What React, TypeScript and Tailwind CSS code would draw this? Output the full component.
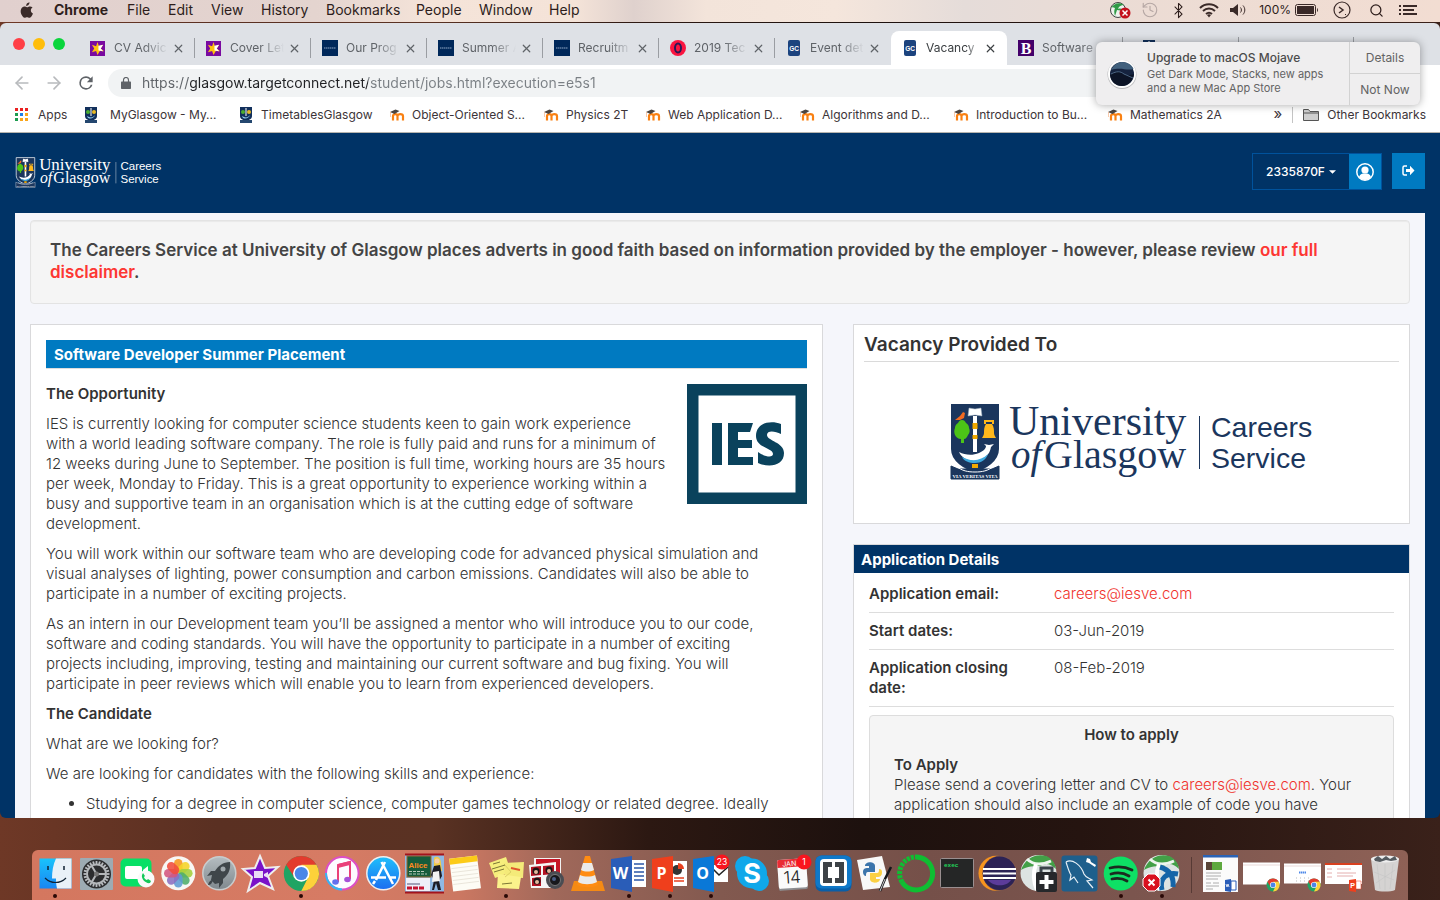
import React from "react";
import { Bluetooth, Search, History as HistoryIcon, ArrowLeft, ArrowRight, X } from "lucide-react";

const sans = "font-['Inter','Liberation_Sans',sans-serif]";

/* ---------- University logo ---------- */

function Logo({ color, rim, className }: { color: string; rim: string; className: string }) {
  return (
    <svg viewBox="-2 0 365 76" className={className} role="img" aria-label="University of Glasgow Careers Service">
      <path d="M1 1h46v44c0 12-13 19-23 22C14 64 1 57 1 45z" fill="#1b365d" stroke={rim} strokeWidth="2" />
      <path d="M0 62l7 3h34l7-3v13H0z" fill="#1b365d" stroke={rim} strokeWidth="1" />
      <path d="M5 62c6 5 12 6 19 6s13-1 19-6" fill="none" stroke="#fff" strokeWidth="1" />
      <text x="24" y="73.500" fontSize="5" fontWeight="700" textAnchor="middle" fill="#fff" fontFamily="Liberation Serif, serif">VIA VERITAS VITA</text>
      <rect x="22" y="12" width="4" height="36" fill="#fff" />
      <rect x="21.500" y="19" width="5" height="6" fill="#f2a900" />
      <rect x="21.500" y="31" width="5" height="4" fill="#f2a900" />
      <path d="M18 4l6 1 6-1 1 8-7-1-7 1z" fill="#fff" stroke="#9ab" strokeWidth=".5" />
      <path d="M4 16l5-4 3-4 2 1-1 5-4 2z" fill="#f26a21" />
      <path d="M11 16c2 0 3 1 4 3 2 1 3 3 3 5 1 2 1 5-1 7-1 2-2 4-4 4v4h-3v-4c-3 0-5-2-6-4-1-2-1-5 0-7 0-2 1-4 3-5 1-2 2-3 4-3z" fill="#4cc417" />
      <path d="M33 20v-4h10v4h-2v-2h-6v2z" fill="#ffb81c" />
      <path d="M35 20h6c2 3 2 6 2 9 0 2 1 3 2 5H31c1-2 2-3 2-5 0-3 0-6 2-9z" fill="#ffb81c" />
      <path d="M8 48c6 3 13 4 20 1 4-2 7-4 7-7l-2-2 5 1 5-1-3 3c-1 7-7 14-16 14-8 0-14-4-16-9z" fill="#fff" />
      <path d="M11 53c9 5 19 4 26-3-2 6-7 9-13 9s-11-2-13-6z" fill="#3fa9de" />
      <path d="M21 60h6v4h-6z" fill="#f2a900" />
      <g fill={color} fontFamily="Liberation Serif, serif">
        <text x="58" y="31" fontSize="42">University</text>
        <text x="60" y="64" fontSize="39" fontStyle="italic">of</text>
        <text x="93" y="64" fontSize="40">Glasgow</text>
      </g>
      <path d="M248.500 12v53" stroke={color} strokeWidth="1" />
      <g fill={color} fontFamily="Liberation Sans, sans-serif">
        <text x="260" y="33" fontSize="28.500">Careers</text>
        <text x="260" y="64" fontSize="28.500">Service</text>
      </g>
    </svg>
  );
}

/* ---------- Menu bar ---------- */

const menus: [string, string][] = [
  ["Chrome", "w-[73px] font-bold"],
  ["File", "w-[41px]"],
  ["Edit", "w-[43px]"],
  ["View", "w-[50px]"],
  ["History", "w-[65px]"],
  ["Bookmarks", "w-[90px]"],
  ["People", "w-[63px]"],
  ["Window", "w-[70px]"],
  ["Help", "w-[40px]"],
];

function MenuBar() {
  return (
    <nav className="flex h-[22px] shrink-0 items-center bg-[linear-gradient(90deg,#e1d0ce_0%,#e4d4cf_22%,#f5e4d9_30%,#f4e3d8_40%,#dfd1cd_44%,#f3e4da_49%,#f5e6dc_58%,#e5dcd9_67%,#ecdcd4_80%,#f2ddd2_100%)] pr-[23px] pb-0.5 pl-5 text-[14px] leading-5 text-[#2d1d1b]">
      <button aria-label="Apple menu" className="w-[34px]">
        <svg viewBox="0 0 16 18" className="h-4 w-[14px]" fill="#3a2a28">
          <path d="M10.800 0c.1 1.200-.4 2.300-1 3-.7.800-1.700 1.400-2.700 1.300C7 3.200 7.500 2.100 8.200 1.400 8.900.6 10 .1 10.800 0zM14.400 6.200c-1.300.8-2 1.900-2 3.300 0 1.600 1 2.900 2.400 3.500-.3 1-.8 1.900-1.400 2.800-.8 1.200-1.700 2.100-2.700 2.100-1.100 0-1.500-.6-2.700-.6s-1.700.6-2.700.6c-1.100 0-2-1.100-2.800-2.300C.9 13.200.2 10.200 1.200 8c.8-1.900 2.300-2.900 3.800-2.900 1.200 0 2.200.8 3 .8.700 0 1.900-.9 3.400-.9 1.100 0 2.200.4 3 1.200z" />
        </svg>
      </button>
      {menus.map(([label, cls]) => (
        <button key={label} className={"shrink-0 text-left " + cls}>{label}</button>
      ))}
      <div className="ml-auto flex items-center">
        <svg viewBox="0 0 22 18" className="mr-[10px] h-[18px] w-[22px]">
          <circle cx="9" cy="9" r="7.500" fill="#eef3ee" stroke="#444" />
          <path d="M2 7c3-5 9-6 13-3-3 0-5 1-6 4 3-1 5 0 6 2l-7-1-2 6c-1-3-1-6 0-8-2-1-3-1-4 0z" fill="#2f9a45" />
          <circle cx="16" cy="12" r="5.500" fill="#c4101c" />
          <path d="M13.500 9.500l5 5m0-5l-5 5" stroke="#fff" strokeWidth="1.500" />
        </svg>
        <HistoryIcon className="mr-[11px] size-[18px] text-[#b5a7a4]" strokeWidth={1.5} />
        <Bluetooth className="mr-3 size-[17px]" strokeWidth={1.5} />
        <svg viewBox="0 0 20 15" className="mr-[10px] h-[15px] w-5" fill="none" stroke="#3a2a28" strokeWidth="2">
          <path d="M1 5c5-5 13-5 18 0M4 8c3.500-3.300 8.500-3.300 12 0M7 11c2-1.700 4-1.700 6 0" />
          <path d="M8 12c1.300-1 2.700-1 4 0l-2 2.500z" fill="#3a2a28" stroke="none" />
        </svg>
        <svg viewBox="0 0 18 14" className="mr-3 h-[14px] w-[18px]" fill="#3a2a28">
          <path d="M1 5h3l5-4v12L4 9H1z" />
          <path d="M11.500 4.500c1.200 1.500 1.200 3.500 0 5M14 2.500c2.400 2.700 2.400 6.300 0 9" fill="none" stroke="#3a2a28" />
        </svg>
        <span className="mr-1 text-[12px]">100%</span>
        <svg viewBox="0 0 24 12" className="mr-[14px] h-3 w-6">
          <rect x=".5" y=".5" width="20" height="11" rx="2" fill="none" stroke="#3a2a28" />
          <rect x="2" y="2" width="17" height="8" fill="#3a2a28" />
          <path d="M22 4c1.300.6 1.300 3.400 0 4z" fill="#3a2a28" />
        </svg>
        <svg viewBox="0 0 18 18" className="mr-[18px] size-[18px]" fill="none" stroke="#3a2a28">
          <circle cx="9" cy="9" r="8" strokeWidth="1.200" />
          <path d="M6 6l4 3-4 3" strokeWidth="1.500" />
          <path d="M12 14l1-1" />
        </svg>
        <Search className="mr-[15px] size-[15px]" strokeWidth={2} />
        <svg viewBox="0 0 18 12" className="h-3 w-[18px]" stroke="#3a2a28" strokeWidth="2">
          <path d="M0 2h2M4 2h14M0 6h2M4 6h11M0 10h2M4 10h14" />
        </svg>
      </div>
    </nav>
  );
}

/* ---------- Browser tabs ---------- */

const Purple = () => (
  <svg viewBox="0 0 16 16" className="size-[15px]">
    <rect width="16" height="16" fill="#7a0aa0" />
    <path d="M8 1l1.500 4.500L14 4l-2.500 4L15 11l-4.500-.3L8 15l-1.500-4.300L2 12l2.500-4L2 4l4.500 1.500z" fill="#ffc20e" />
    <path d="M9 5l5-1-2.500 4L14 11l-5-1z" fill="#fff" />
  </svg>
);
const Navy = () => (
  <svg viewBox="0 0 16 16" className="size-4">
    <rect width="16" height="16" fill="#00285a" />
    <path d="M2 8h12" stroke="#8fa6c4" strokeWidth="1" strokeDasharray="1.500 .5" />
  </svg>
);
const Round = () => (
  <svg viewBox="0 0 16 16" className="size-4">
    <circle cx="8" cy="8" r="8" fill="#fa1540" />
    <ellipse cx="8" cy="8" rx="3" ry="4.500" fill="none" stroke="#2b1a55" strokeWidth="2" />
  </svg>
);
const GC = () => (
  <svg viewBox="0 0 12 16" className="ml-0.5 h-4 w-3">
    <rect width="12" height="16" rx="2" fill="#1c437e" />
    <text x="6" y="10.500" fontSize="6.500" fontWeight="700" textAnchor="middle" fill="#fff" fontFamily="Liberation Sans, sans-serif">GC</text>
  </svg>
);
const Bee = () => (
  <svg viewBox="0 0 16 16" className="size-4">
    <rect width="16" height="16" fill="#43006a" />
    <text x="8" y="13.500" fontSize="16" fontWeight="700" textAnchor="middle" fill="#fff" fontFamily="Liberation Serif, serif">B</text>
  </svg>
);
const MiniCrest = () => (
  <svg viewBox="0 0 12 16" className="h-4 w-[12px]">
    <path d="M0 0h12v9c0 3-3 4-6 5-3-1-6-2-6-5z" fill="#12305c" />
    <circle cx="3" cy="5" r="2" fill="#4caf30" />
    <circle cx="9" cy="5" r="2" fill="#e8b923" />
    <path d="M5.500 1h1v8h-1z" fill="#fff" />
    <path d="M2 9c3 2 6 2 8-1-1 4-7 5-8 1z" fill="#8ecbee" />
    <path d="M0 13h12v3H0z" fill="#24476f" />
  </svg>
);

const tabs: { title: string; icon: React.ReactNode; active?: boolean; line?: boolean }[] = [
  { title: "CV Advic", icon: <Purple />, line: true },
  { title: "Cover Let", icon: <Purple />, line: true },
  { title: "Our Prog", icon: <Navy />, line: true },
  { title: "Summer A", icon: <Navy />, line: true },
  { title: "Recruitm", icon: <Navy />, line: true },
  { title: "2019 Tec", icon: <Round />, line: true },
  { title: "Event det", icon: <GC /> },
  { title: "Vacancy", icon: <GC />, active: true },
];

function TabStrip() {
  return (
    <div className="flex h-[42px] shrink-0 items-end overflow-hidden bg-[#dee1e6]">
      <div className="flex h-[42px] w-[79px] shrink-0 items-center gap-2 pl-[13px]">
        <button aria-label="Close window" className="size-3 rounded-full bg-[#ff3f46]" />
        <button aria-label="Minimise window" className="size-3 rounded-full bg-[#ffbd0a]" />
        <button aria-label="Zoom window" className="size-3 rounded-full bg-[#0ad53c]" />
      </div>
      {tabs.map((t) => (
        <div
          key={t.title}
          className={"relative flex h-[34px] w-[116px] shrink-0 items-center rounded-t-lg pl-[11px] text-[12px] " + (t.active ? "bg-white text-[#3c4043]" : "text-[#5f6368]")}
        >
          <span className="flex w-6 shrink-0 items-center">{t.icon}</span>
          <a href="#" className={"w-[54px] whitespace-nowrap " + (t.active ? "[mask-image:linear-gradient(to_right,black_75%,transparent)]" : "[mask-image:linear-gradient(to_right,black_55%,transparent)]")}>{t.title}</a>
          <button aria-label={"Close " + t.title} className="ml-1"><X className="size-[13px]" strokeWidth={2.2} /></button>
          {t.line && <span className="absolute top-[7px] right-0 h-5 w-px bg-[#9a9da2]" />}
        </div>
      ))}
      <div className="flex h-[34px] w-[116px] shrink-0 items-center justify-between text-[12px] text-[#5f6368]">
        <span className="flex w-[35px] shrink-0 items-center pl-[11px]"><Bee /></span>
        <a href="#" className="flex-1 [mask-image:linear-gradient(to_right,black_40px,transparent_64px)]">Software</a>
        <span className="mb-0.5 h-5 w-px bg-[#9a9da2]" />
      </div>
      <div className="flex h-[34px] w-[116px] shrink-0 items-center justify-between pl-5">
        <MiniCrest />
        <span className="mb-0.5 h-5 w-px bg-[#9a9da2]" />
      </div>
      <div className="flex h-[34px] w-[115px] shrink-0 items-center justify-end">
        <span className="mb-0.5 h-5 w-px bg-[#9a9da2]" />
      </div>
    </div>
  );
}

/* ---------- Toolbar and bookmarks ---------- */

function Toolbar() {
  return (
    <div className="flex h-9 shrink-0 items-center bg-white pl-3">
      <button aria-label="Back" className="w-8"><ArrowLeft className="size-5 text-[#b8babd]" /></button>
      <button aria-label="Forward" className="w-8"><ArrowRight className="size-5 text-[#b8babd]" /></button>
      <button aria-label="Reload" className="w-8">
        <svg viewBox="0 0 24 24" className="size-5" fill="#5f6368">
          <path d="M17.650 6.350A7.960 7.960 0 0 0 12 4a8 8 0 1 0 7.730 10h-2.080A6 6 0 1 1 12 6c1.660 0 3.140.69 4.220 1.780L13 11h7V4z" />
        </svg>
      </button>
      <label className="mr-[120px] flex h-7 flex-1 items-center rounded-full bg-[#f1f3f4] pl-[13px]">
        <svg viewBox="0 0 10 12" className="mr-[11px] h-3 w-[10px]" fill="#5f6368">
          <path d="M1 4.500h8c.6 0 1 .4 1 1V11c0 .6-.4 1-1 1H1c-.6 0-1-.4-1-1V5.500c0-.6.4-1 1-1z" />
          <path d="M2.500 5V3a2.500 2.500 0 0 1 5 0v2" fill="none" stroke="#5f6368" strokeWidth="1.200" />
        </svg>
        <span className="sr-only">Address</span>
        <input
          defaultValue="https://glasgow.targetconnect.net/student/jobs.html?execution=e5s1"
          className="flex-1 bg-[linear-gradient(90deg,#5f6368_48px,#202124_48px,#202124_226px,#7a7f84_226px)] bg-clip-text pb-0.5 text-[14px] text-transparent outline-none"
        />
      </label>
    </div>
  );
}

const Moodle = () => (
  <svg viewBox="0 0 16 12" className="h-3 w-4">
    <path d="M4 11.500V7c0-2.500 4.500-2.500 4.500 0v4.500M8.500 7c0-2.500 5.500-2.500 5.500 0v4.500" fill="none" stroke="#f98012" strokeWidth="2.200" />
    <path d="M1 3l5.500-2.500L10.500 2 5.500 5z" fill="#4a4440" />
    <path d="M1.500 3v5" stroke="#f7b58a" strokeWidth=".7" />
  </svg>
);

const bookmarks: { label: string; cls: string; icon: React.ReactNode }[] = [
  { label: "MyGlasgow - My...", cls: "w-[155px] gap-[13px]", icon: <MiniCrest /> },
  { label: "TimetablesGlasgow", cls: "w-[149px] gap-[9px]", icon: <MiniCrest /> },
  { label: "Object-Oriented S...", cls: "w-[154px] gap-[7px]", icon: <Moodle /> },
  { label: "Physics 2T", cls: "w-[102px] gap-[7px]", icon: <Moodle /> },
  { label: "Web Application D...", cls: "w-[154px] gap-[7px]", icon: <Moodle /> },
  { label: "Algorithms and D...", cls: "w-[154px] gap-[7px]", icon: <Moodle /> },
  { label: "Introduction to Bu...", cls: "w-[154px] gap-[7px]", icon: <Moodle /> },
  { label: "Mathematics 2A", cls: "w-[140px] gap-[7px]", icon: <Moodle /> },
];

function Bookmarks() {
  const dots = ["#ea2020", "#ea2020", "#ea2020", "#1c9c50", "#1d7fe8", "#f9a51a", "#1c9c50", "#f9a51a", "#f9a51a"];
  return (
    <div className="flex h-8 shrink-0 items-center overflow-hidden border-b border-[#b6b4ae] bg-white pb-1 pr-[14px] pl-[15px] text-[12px] whitespace-nowrap text-[#3c3438]">
      <a href="#" className="flex w-[70px] shrink-0 items-center gap-[10px]">
        <svg viewBox="0 0 13 13" className="size-[13px]">
          {dots.map((c, i) => <rect key={i} x={(i % 3) * 5} y={Math.floor(i / 3) * 5} width="3" height="3" fill={c} />)}
        </svg>
        Apps
      </a>
      {bookmarks.map((b) => (
        <a href="#" key={b.label} className={"flex shrink-0 items-center " + b.cls}>{b.icon}{b.label}</a>
      ))}
      <div className="ml-auto flex items-center">
        <button aria-label="More bookmarks" className="pb-0.5 text-[15px] leading-4">»</button>
        <span className="mx-[10px] h-4 w-px bg-[#c4c4c4]" />
        <svg viewBox="0 0 16 13" className="mr-2 h-[13px] w-4" fill="#cfcfcf" stroke="#555">
          <path d="M.5 1.500h5l1.500 2h8.500v9H.5zM.5 5h15" />
        </svg>
        <a href="#">Other Bookmarks</a>
      </div>
    </div>
  );
}

function Notification() {
  return (
    <aside className="absolute top-[42px] right-5 flex h-[63px] w-[324px] overflow-hidden rounded-md bg-[#efeeef] text-[11px] text-[#636363] shadow-[0_0_8px_rgba(0,0,0,0.35)]">
      <div className="flex flex-1 items-center border-r border-[#d2d2d2] pl-[11px]">
        <svg viewBox="0 0 30 30" className="mr-[10px] size-[30px] shrink-0">
          <circle cx="15" cy="15.500" r="14.500" fill="#b9b9bb" />
          <circle cx="15" cy="15" r="14" fill="#fdfdfd" />
          <circle cx="15" cy="15" r="12" fill="#15233f" />
          <path d="M4 11c3-6 8-8 11-8 6 0 10 3 11.500 7-7 2-12-2-22.500 1z" fill="#41607d" />
          <path d="M3 16c6-4 9-4 13-1 4 2 8 1 11 0-1 7-6 12-12 12S4 23 3 16z" fill="#0c1426" />
          <path d="M4 15c6-3 9-3 13 0l9 4" fill="none" stroke="#4b6481" strokeWidth="1" />
        </svg>
        <div className="pb-[3px] leading-[14px]">
          <h2 className="mb-px text-[12px] leading-4 font-medium text-[#4b4b4b]">Upgrade to macOS Mojave</h2>
          <p>Get Dark Mode, Stacks, new apps<br />and a new Mac App Store</p>
        </div>
      </div>
      <div className="flex w-[70px] flex-col text-[12px]">
        <button className="flex-1 border-b border-[#d2d2d2]">Details</button>
        <button className="flex-1">Not Now</button>
      </div>
    </aside>
  );
}

/* ---------- Web page ---------- */

function Header() {
  return (
    <header className="flex h-20 items-start justify-between px-[15px] pt-5">
      <a href="#" className="pt-1"><Logo color="#fff" rim="#dfe6ee" className="h-[31px] w-[147px]" /></a>
      <div className="flex gap-[10px]">
        <div className="flex h-[37px] border border-[#00529c]">
          <button className="flex w-24 items-center justify-center gap-1 text-[12px] font-medium text-white">
            2335870F
            <svg viewBox="0 0 8 4" className="h-1 w-[7px]" fill="#fff"><path d="M0 0h8L4 4z" /></svg>
          </button>
          <button aria-label="Profile" className="flex w-8 items-center justify-center bg-[#007ac1]">
            <svg viewBox="0 0 18 18" className="size-[18px]">
              <circle cx="9" cy="9" r="8.200" fill="none" stroke="#fff" strokeWidth="1.500" />
              <circle cx="9" cy="7" r="3.600" fill="#fff" />
              <path d="M3 14c1-3 3-3.500 4-3.500h4c1 0 3 .5 4 3.500-3 4-9 4-12 0z" fill="#fff" />
            </svg>
          </button>
        </div>
        <button aria-label="Log out" className="flex h-9 w-[33px] items-center justify-center bg-[#007ac1]">
          <svg viewBox="0 0 13 12" className="h-3 w-[13px]">
            <path d="M5 1H2.500C1.500 1 1 1.500 1 2.500v6c0 1 .5 1.500 1.500 1.500H5" fill="none" stroke="#fff" strokeWidth="1.500" />
            <path d="M4 4h4V.8L12.500 5.500 8 10.200V7H4z" fill="#fff" />
          </svg>
        </button>
      </div>
    </header>
  );
}

const Mail = () => <a href="mailto:careers@iesve.com" className="text-[#f0322c]">careers@iesve.com</a>;

function Vacancy() {
  return (
    <article className="min-w-0 border border-[#d9d9db] bg-white p-[15px]">
      <h1 className="h-7 bg-[#007ac1] px-2 text-[15px] leading-[30px] font-bold text-white">Software Developer Summer Placement</h1>
      <div className="flow-root space-y-[10px] border-t border-[#ddd] pt-[15px] text-[15px] leading-5 font-light">
        <svg viewBox="0 0 120 120" className="float-right ml-4 size-[120px]" role="img" aria-label="IES">
          <rect width="120" height="120" fill="#0a425c" />
          <rect x="11.500" y="11.500" width="97" height="97" fill="#fff" />
          <path d="M25 39h10v42H25zM41 39h25l-3 9H51v8h14v8H51v9h15v8H41z" fill="#0a425c" />
          <path d="M94 40v10c-6-3-14-4-14 1 0 6 17 7 17 18 0 13-15 15-26 10V68c7 5 15 6 15 2 0-6-17-6-17-18 0-13 14-16 25-12z" fill="#0a425c" />
        </svg>
        <h2 className="font-semibold">The Opportunity</h2>
        <p>
          IES is currently looking for computer science students keen to gain work experience<br />
          with a world leading software company. The role is fully paid and runs for a minimum of<br />
          12 weeks during June to September. The position is full time, working hours are 35 hours<br />
          per week, Monday to Friday. This is a great opportunity to experience working within a<br />
          busy and supportive team in an organisation which is at the cutting edge of software<br />
          development.
        </p>
        <p>
          You will work within our software team who are developing code for advanced physical simulation and<br />
          visual analyses of lighting, power consumption and carbon emissions. Candidates will also be able to<br />
          participate in a number of exciting projects.
        </p>
        <p>
          As an intern in our Development team you’ll be assigned a mentor who will introduce you to our code,<br />
          software and coding standards. You will have the opportunity to participate in a number of exciting<br />
          projects including, improving, testing and maintaining our current software and bug fixing. You will<br />
          participate in peer reviews which will enable you to learn from experienced developers.
        </p>
        <h2 className="font-semibold">The Candidate</h2>
        <p>What are we looking for?</p>
        <p>We are looking for candidates with the following skills and experience:</p>
        <ul className="list-disc pl-10">
          <li>Studying for a degree in computer science, computer games technology or related degree. Ideally</li>
        </ul>
      </div>
    </article>
  );
}

function Sidebar() {
  return (
    <div className="min-w-0">
      <section className="mb-5 h-[200px] border border-[#d9d9db] bg-white px-[10px]">
        <h2 className="border-b border-[#dadada] pt-2 pb-[5px] text-[19px] leading-[23px] font-semibold">Vacancy Provided To</h2>
        <Logo color="#1b365d" rim="#1b365d" className="mx-auto mt-[42px] h-[76px] w-[365px]" />
      </section>
      <section className="border border-[#d9d9db] bg-white">
        <h2 className="h-7 bg-[#003366] px-[7px] text-[15px] leading-[30px] font-bold text-white">Application Details</h2>
        <div className="px-[15px]">
          <table className="w-full table-fixed text-left align-top text-[15px] leading-5 font-light">
            <tbody>
              <tr className="border-b border-[#ddd]">
                <th className="w-[185px] pt-[11px] pb-2 font-semibold">Application email:</th>
                <td className="pt-[11px] pb-2"><Mail /></td>
              </tr>
              <tr className="border-b border-[#ddd]">
                <th className="py-2 font-semibold">Start dates:</th>
                <td className="py-2">03-Jun-2019</td>
              </tr>
              <tr className="border-b border-[#ddd] align-top">
                <th className="py-2 pr-8 font-semibold">Application closing date:</th>
                <td className="py-2">08-Feb-2019</td>
              </tr>
            </tbody>
          </table>
          <div className="mt-2 rounded-sm border border-[#ddd] bg-[#f5f5f5] px-6 py-[9px] text-[15px] leading-5 font-light">
            <h3 className="mb-[10px] text-center font-semibold">How to apply</h3>
            <h4 className="font-semibold">To Apply</h4>
            <p>Please send a covering letter and CV to <Mail />. Your<br />application should also include an example of code you have</p>
          </div>
        </div>
      </section>
    </div>
  );
}

/* ---------- Dock ---------- */

const Chrome = ({ cx, cy, r }: { cx: number; cy: number; r: number }) => (
  <g transform={`translate(${cx} ${cy}) scale(${r / 18})`}>
    <circle r="18" fill="#1fa463" />
    <path d="M-15.600-9A18 18 0 0 1 15.600-9L0-8-7 4z" fill="#e33b2e" />
    <path d="M15.600-9H0L7 4 0 18A18 18 0 0 0 15.600-9z" fill="#fdd13a" />
    <circle r="8.500" fill="#fff" />
    <circle r="6.800" fill="#4a86e8" />
  </g>
);

const Office = ({ color, letter }: { color: string; letter: string }) => (
  <g>
    <path d="M2 9l21-3v36L2 38z" fill={color} />
    <text x="11.500" y="28.500" fontSize="16" fontWeight="700" textAnchor="middle" fill="#fff" fontFamily="Open Sans, sans-serif">{letter}</text>
  </g>
);

const Badge = ({ n }: { n: string }) => (
  <g>
    <circle cx="31" cy="12" r="7.500" fill="#f9151e" />
    <text x="31" y="15" fontSize="8.500" textAnchor="middle" fill="#fff" fontFamily="Inter, sans-serif">{n}</text>
  </g>
);

const petals = ["#f7941d", "#f4d428", "#a2cf3c", "#4fae6a", "#5d9bd4", "#8a6fc0", "#d3557f", "#f04c3c"];
const teeth = Array.from({ length: 24 }, (_, i) => i * 15);

const Disc = ({ id, from, to, rim = "#eee" }: { id: string; from: string; to: string; rim?: string }) => (
  <g>
    <defs><linearGradient id={id} x2="0" y2="1"><stop stopColor={from} /><stop offset="1" stopColor={to} /></linearGradient></defs>
    <circle cx="20.300" cy="23.300" r="16.500" fill={`url(#${id})`} stroke={rim} strokeWidth="1.500" />
  </g>
);

const Ball = () => (
  <g>
    <circle cx="19.500" cy="23" r="18" fill="#dde3e2" />
    <path d="M2 20c4-11 14-17 25-14 5 2 9 6 10 13-6-6-11-6-16-3-5 0-13 0-19 4z" fill="#43a047" />
    <path d="M8 9c6 6 13 7 24 2" fill="none" stroke="#eef5ee" strokeWidth="3" />
    <path d="M17 14c-3 8-3 17 1 26" fill="none" stroke="#fff" strokeWidth="4" />
  </g>
);

const dock: { name: string; dot?: boolean; art: React.ReactNode }[] = [
  { name: "Finder", dot: true, art: <g>
    <defs><linearGradient id="fi" x2="0" y2="1"><stop stopColor="#19c3fb" /><stop offset="1" stopColor="#1a86f3" /></linearGradient></defs>
    <rect x="4.500" y="8.500" width="32" height="30" fill="url(#fi)" />
    <path d="M21 8.500h15.500v30H22c-1-4-1-8-1-10h-4c0-7 1-14 4-20z" fill="#e9f1f8" />
    <path d="M13 16v4M29 16v4" stroke="#123" strokeWidth="1.500" />
    <path d="M10 28c6 6 15 6 21 0" fill="none" stroke="#123" strokeWidth="1.200" />
  </g> },
  { name: "System Preferences", art: <g>
    <rect x="4" y="8" width="33" height="32" rx="1" fill="#9dabb3" />
    <circle cx="20.500" cy="24" r="14.500" fill="#2c2d2f" />
    {teeth.map((a) => <path key={a} d="M20.500 11v3" stroke="#b9bcc0" strokeWidth="1.800" transform={`rotate(${a} 20.500 24)`} />)}
    <circle cx="20.500" cy="24" r="9.500" fill="none" stroke="#b4b7ba" strokeWidth="2" />
    <path d="M20.500 24h9.500M20.500 24l-5-8.500M20.500 24l-5 8.500" stroke="#b4b7ba" strokeWidth="2" />
    <circle cx="20.500" cy="24" r="2.500" fill="#777" />
  </g> },
  { name: "FaceTime", art: <g>
    <rect x="3.500" y="8.500" width="31" height="28" rx="5" fill="#07e066" />
    <rect x="8" y="16" width="17" height="13" rx="2" fill="#fff" />
    <path d="M26 20l5-4v13l-5-4z" fill="#fff" />
    <circle cx="29" cy="29" r="8.500" fill="#fafafa" />
    <path d="M25 25c-1 4 4 9 8 8l1-2-3-2-1 1c-1 0-3-2-3-3l1-1-2-3z" fill="#15c95a" />
  </g> },
  { name: "Photos", art: <g>
    <circle cx="20.300" cy="23.300" r="17" fill="#f8f7f4" />
    {petals.map((c, i) => <rect key={c} x="16" y="9" width="8.600" height="14" rx="4.300" fill={c} opacity=".88" transform={`rotate(${i * 45} 20.300 23.300)`} />)}
  </g> },
  { name: "Launchpad", art: <g>
    <Disc id="lp" from="#b5bdc1" to="#7f888d" rim="#c8cccd" />
    <path d="M31 12c-7 0-12 4-15 9h-4l-4 5 5-1-1 5 4 4 4-1 0 5 4-5v-4c5-4 8-9 7-17z" fill="#3f464a" />
    <circle cx="24" cy="19" r="2.500" fill="#a0a8ac" />
    <path d="M9 35c1-4 3-5 5-5-1 3-2 5-5 5z" fill="#3f464a" />
  </g> },
  { name: "iMovie", art: <g>
    <path d="M20 6l5 12 13-1-10 9 5 13-13-6-12 8 4-14L3 19l12-1z" fill="#7a12c9" stroke="#eee" strokeWidth="2" />
    <path d="M14 21h9v7h-9zM24 24l4-2v6l-4-2z" fill="#eadcf5" />
  </g> },
  { name: "Chrome", dot: true, art: <Chrome cx={20.3} cy={23.5} r={17.5} /> },
  { name: "iTunes", art: <g>
    <circle cx="20.300" cy="23.300" r="16.300" fill="#fdfbff" stroke="#dc4fc4" strokeWidth="2" />
    <path d="M4 23a16.300 16.300 0 0 0 16 16.500" fill="none" stroke="#35b7f0" strokeWidth="2" />
    <path d="M16 32V15l12-3v17" fill="none" stroke="#ea3f79" strokeWidth="2" />
    <path d="M16 14l12-3v4l-12 3z" fill="#ea3f79" />
    <ellipse cx="13.500" cy="32" rx="3.300" ry="2.700" fill="#6470ee" />
    <ellipse cx="25.500" cy="29.500" rx="3.300" ry="2.700" fill="#a651d8" />
  </g> },
  { name: "App Store", art: <g>
    <Disc id="as" from="#1fc0fb" to="#1b6df0" />
    <path d="M22 12L13 30M18.500 12L30 34M8 27.500h15M27 27.500h6M12 31l-2 3" fill="none" stroke="#fff" strokeWidth="2.500" />
  </g> },
  { name: "Alice", art: <g>
    <rect x="1" y="4" width="39" height="39" fill="#8fb9e4" />
    <rect x="3" y="6" width="24" height="21" fill="#155c3c" stroke="#9b6b2f" />
    <text x="14" y="18" fontSize="8" fontWeight="700" textAnchor="middle" fill="#ff8a1e" fontFamily="Liberation Sans, sans-serif">Alice</text>
    <path d="M5 21.500h16M5 24h18" stroke="#b6c9b8" strokeDasharray="3 1" />
    <rect x="2" y="28" width="24" height="13" fill="#eef0f8" />
    <path d="M3 38h18" stroke="#c31531" strokeWidth="3" strokeDasharray="5 1" />
    <path d="M3 34h13" stroke="#557" />
    <path d="M30 8c3-3 7 0 7 5l1 8h-8z" fill="#f0cb4a" /><circle cx="33" cy="11" r="2.500" fill="#f4cda8" />
    <path d="M30 16l6-1 2 11-3 5 2 9h-3l-2-7-2 7h-2l2-10-3-5z" fill="#1b1c24" />
    <path d="M29 22l6-1 1 10-8 1z" fill="#f3f3f3" />
    <path d="M1 4.500h39M1 42.500h39" stroke="#a3131b" strokeWidth="2" />
  </g> },
  { name: "Notes", art: <g transform="rotate(-7 20 23)">
    <rect x="6" y="7" width="28" height="33" fill="#fdfcf5" />
    <rect x="6" y="7" width="28" height="6" fill="#fccb17" />
    <path d="M7 17h26M7 21h26M7 25h26M7 29h26M7 33h26" stroke="#e2ddd0" strokeWidth=".7" />
  </g> },
  { name: "Stickies", dot: true, art: <g>
    <path d="M3 13l17-6 5 15-16 6z" fill="#f6ee7c" /><path d="M18 13l20-1-1 16-18-1z" fill="#f4ea79" /><path d="M12 24l23 3-2 12-22-1z" fill="#fbf28b" />
    <path d="M18 14l7 8-6 5" fill="none" stroke="#cfc45a" strokeWidth=".7" />
    <path d="M7 14l7-2M6 19l13-4M8 22l10-3M16 34l10-1" stroke="#7c7736" /><path d="M25 18l9 2" stroke="#e0562c" strokeWidth="2" />
  </g> },
  { name: "Photo Booth", art: <g>
    <rect x="7" y="8" width="27" height="27" fill="#f2f2f2" /><rect x="9" y="9" width="24" height="18" fill="#c71627" />
    <path d="M2 15l27-3v26l-25 0z" fill="#f6f6f6" />
    <path d="M4 17l10-1v9l-10 1zM16 16l11-1v9l-11 1zM5 28l9-1v9h-9z" fill="#b21222" />
    <circle cx="9" cy="21" r="3.500" fill="#1f1416" /><circle cx="22" cy="20" r="3.500" fill="#1f1416" /><circle cx="10" cy="31" r="3.500" fill="#1f1416" />
    <circle cx="9" cy="22" r="2" fill="#e3b79c" /><circle cx="22" cy="21" r="2" fill="#e3b79c" /><circle cx="10" cy="32" r="2" fill="#e3b79c" />
    <circle cx="28" cy="30" r="9" fill="#4a4c52" /><circle cx="28" cy="30" r="5.500" fill="#17181c" stroke="#777" /><circle cx="27" cy="29" r="2" fill="#4b5e86" />
  </g> },
  { name: "VLC", art: <g>
    <path d="M6 31h28l3 10H3z" fill="#f58a14" /><path d="M17 6h5l8 29c-5 3-16 3-21 0z" fill="#ff8c12" />
    <path d="M15 13h9l2 7c-4 2-9 2-13 0zM12 25c5 2 11 2 15 0l2 7c-6 3-14 3-19 0z" fill="#eaeaea" />
  </g> },
  { name: "Word", dot: true, art: <g>
    <rect x="15" y="10" width="22" height="27" fill="#fff" /><path d="M25 14h10M25 18h10M25 22h10M25 26h10M25 30h10" stroke="#2b57a8" strokeWidth="1.500" /><Office color="#2a5db8" letter="W" />
  </g> },
  { name: "PowerPoint", dot: true, art: <g>
    <rect x="15" y="11" width="22" height="25" fill="#fff" /><circle cx="27" cy="20" r="5" fill="#333" /><path d="M28 19v-6a6 6 0 0 1 6 6z" fill="#e8401f" /><path d="M24 28h10M24 31h10" stroke="#e8401f" strokeWidth="1.500" /><Office color="#ef3f1c" letter="P" />
  </g> },
  { name: "Outlook", dot: true, art: <g>
    <path d="M15 15h22v17H15z" fill="#fff" /><path d="M22 19l6 6 9-8" fill="none" stroke="#222" strokeWidth="1.500" /><Office color="#0a78d7" letter="O" /><Badge n="23" />
  </g> },
  { name: "Skype", art: <g>
    <circle cx="20" cy="23.500" r="15" fill="#10a8ea" /><circle cx="13" cy="16" r="10" fill="#10a8ea" /><circle cx="27" cy="31" r="10" fill="#10a8ea" />
    <text x="20" y="33" fontSize="27" fontWeight="700" textAnchor="middle" fill="#fff" fontFamily="Inter, sans-serif">S</text>
  </g> },
  { name: "Calendar", art: <g>
    <g transform="rotate(-4 20 24)">
      <rect x="5" y="9" width="29" height="31" rx="2" fill="#8d8d90" /><rect x="5" y="9" width="29" height="29" rx="2" fill="#fafafa" /><path d="M5 17v-6a2 2 0 0 1 2-2h27v8z" fill="#e92c34" />
      <text x="17" y="16" fontSize="7" textAnchor="middle" fill="#fff" fontFamily="Inter, sans-serif">JAN</text>
      <text x="19" y="33" fontSize="17" fontWeight="300" textAnchor="middle" fill="#222" fontFamily="Inter, sans-serif">14</text>
    </g>
    <Badge n="1" />
  </g> },
  { name: "Brackets", art: <g>
    <rect x="1.500" y="5.500" width="36" height="36" rx="6" fill="#0a5fa8" /><rect x="1.500" y="5.500" width="36" height="33" rx="6" fill="#0f78c8" />
    <rect x="6" y="9" width="27" height="27" rx="4" fill="#fff" />
    <path d="M18 14.500h-6.500v16H18M21 14.500h6.500v16H21" fill="none" stroke="#3d4247" strokeWidth="5" />
  </g> },
  { name: "IDLE", art: <g>
    <path d="M2 10l25-4 8 31-27 3z" fill="#f8f8f8" />
    <path d="M8 22c0-4 3-4 6-4v-2h-4c0-5 10-5 10 0v6h-7c-2 0-2 2-2 4-2 0-3-2-3-4z" fill="#3c75ab" /><path d="M27 22c0 5-3 5-6 5v2h4c0 5-11 5-10-1v-5h7c2 0 2-2 2-4 2 0 3 1 3 3z" fill="#fbd043" />
    <path d="M36 17l-6 12-5 12" fill="none" stroke="#15161b" strokeWidth="2.500" /><path d="M30 29l-5 12" stroke="#c9c9c9" strokeWidth="1" />
  </g> },
  { name: "Anaconda", art: <g fill="none" stroke="#0fbe32">
    <path d="M19 7a16.500 16.500 0 1 1-13 25" strokeWidth="5" /><path d="M6 32A16.500 16.500 0 0 1 19 7" strokeWidth="5" strokeDasharray="3 1.200" />
  </g> },
  { name: "Terminal", art: <g>
    <rect x="3.500" y="8.500" width="33" height="29" rx="1" fill="#252626" stroke="#9a8f90" /><text x="7" y="17" fontSize="6" fontWeight="700" fill="#22d35a" fontFamily="Liberation Mono, monospace">exec</text>
  </g> },
  { name: "Eclipse", art: <g>
    <circle cx="18" cy="23.300" r="17.500" fill="#f7941e" /><circle cx="22" cy="23.300" r="17.500" fill="#7d564e" /><circle cx="21.500" cy="23.300" r="16.700" fill="#2c2255" />
    <path d="M10 30h23c-4 7-18 7-23 0z" fill="#5c3c9a" /><path d="M5 19h33M5 23.500h33M5 28h33" stroke="#fff" strokeWidth="1.800" />
  </g> },
  { name: "Remote Desktop", art: <g>
    <Ball /><rect x="17" y="22" width="21" height="20" rx="2" fill="#26282b" /><path d="M22 22v-4h11v4" fill="none" stroke="#3b444a" strokeWidth="3" /><path d="M27.500 25v14M20.500 32h14" stroke="#fff" strokeWidth="4" />
  </g> },
  { name: "MySQL Workbench", art: <g>
    <rect x="1.500" y="5.500" width="36" height="36" rx="3" fill="#1e5f8c" /><path d="M6 12c6-4 15 3 18 12 2 4 5 4 8 6l-5 1 6 7M6 12c2 6 3 10 5 13l-1 5 4-3 4 6" fill="none" stroke="#e9f1f7" strokeWidth="1.200" /><path d="M27 8l3 1 1 3 5 3-1 2-6-4-3-1z" fill="#fff" />
  </g> },
  { name: "Spotify", dot: true, art: <g>
    <circle cx="19.700" cy="23.500" r="17" fill="#0ee065" /><path d="M9 18c8-2 16-1 22 2M10 24c7-2 13-1 18 2M11 29c5-1 10-1 15 2" fill="none" stroke="#1b2b20" strokeWidth="2.800" strokeLinecap="round" />
  </g> },
  { name: "AnyConnect", dot: true, art: <g>
    <Ball /><path d="M36 24c-11-2-19 4-16 16M18 17c10 3 14 10 13 20" fill="none" stroke="#1565a8" strokeWidth="5" />
    <path d="M6 24h7l5 5v7l-5 5H6l-5-5v-7z" fill="#d8121f" stroke="#fff" /><path d="M6.500 29.500l6 6m0-6l-6 6" stroke="#fff" strokeWidth="2" />
  </g> },
];

const files: { name: string; art: React.ReactNode }[] = [
  { name: "Document", art: <g>
    <rect x="3" y="5" width="35" height="37" fill="#fbfbfb" /><rect x="3" y="5" width="35" height="2.500" fill="#2b63b5" /><rect x="6" y="12" width="7" height="8" fill="#5a4538" /><rect x="12" y="12" width="10" height="8" fill="#5ea83f" />
    <path d="M6 23h15M6 26h15M6 29h12M6 33h5M13 33h6M6 36h13M6 39h7" stroke="#999" strokeWidth=".8" /><path d="M25 30l6-1v13l-6-1z" fill="#2a5db8" /><path d="M31 31h5v9h-5z" fill="#fff" stroke="#2a5db8" /><path d="M26 34l1 3 1-3 1 3" stroke="#fff" fill="none" strokeWidth=".8" />
  </g> },
  { name: "Blank window", art: <g><rect x="2" y="12.500" width="37" height="22" fill="#fff" /><path d="M2 15h37" stroke="#e9d9d8" /><Chrome cx={32} cy={35} r={6.5} /></g> },
  { name: "Search window", art: <g>
    <rect x="2" y="13.500" width="37" height="20" fill="#fff" /><path d="M2 16h37" stroke="#e9d9d8" /><path d="M17 22.500h7" stroke="#4a86e8" strokeWidth="2" strokeDasharray="1.500 .5" /><path d="M14 28h13M14 31h13" stroke="#bbb" strokeDasharray="1 3" /><Chrome cx={32} cy={35} r={6.5} />
  </g> },
  { name: "Slides window", art: <g>
    <rect x="2" y="13" width="37" height="21" fill="#fff" /><rect x="2" y="13" width="37" height="2" fill="#d8401f" /><path d="M4 19h5M4 23h5M4 27h5M14 19h14M14 23h19M14 26h16" stroke="#d99" strokeWidth=".8" /><path d="M26 30l7-1v13l-7-1z" fill="#ef3f1c" /><path d="M33 31h5v8h-5z" fill="#fff" stroke="#ef3f1c" strokeWidth=".5" /><text x="29.500" y="38" fontSize="7" fontWeight="700" textAnchor="middle" fill="#fff" fontFamily="Liberation Sans, sans-serif">P</text>
  </g> },
  { name: "Trash", art: <g>
    <path d="M7 9h28l-4 31c-4 2-16 2-20 0z" fill="#d9d9d9" opacity=".95" /><ellipse cx="21" cy="9" rx="14" ry="3.500" fill="#eee" /><path d="M10 9l4-3 4 3 4-3 4 3 5-3 2 4-6 1-5-1-6 2-5-1z" fill="#555b60" /><path d="M13 14l3 25M21 14v26M29 14l-3 25M10 22l20 8M31 20L12 33" stroke="#c4c4c4" strokeWidth=".6" />
  </g> },
];

function DockItem({ name, dot, art }: { name: string; dot?: boolean; art: React.ReactNode }) {
  return (
    <button aria-label={name} className="h-[50px] w-[41px] shrink-0">
      <svg viewBox="0 0 41 50" className="block h-[50px] w-[41px]">
        {art}
        {dot && <circle cx="20" cy="46" r="2" fill="#2a0906" />}
      </svg>
    </button>
  );
}

export default function App() {
  return (
    <div className={"relative flex h-screen flex-col overflow-hidden bg-[linear-gradient(90deg,#6e3826_0%,#5a3022_15%,#5a3223_30%,#2c1812_45%,#1d110e_60%,#251410_75%,#3a211a_100%)] " + sans}>
      <MenuBar />
      <div className="mt-px flex min-h-0 flex-1 flex-col overflow-hidden rounded-md">
        <TabStrip />
        <Toolbar />
        <Bookmarks />
        <main className="min-h-0 flex-1 overflow-hidden bg-[#003366] text-[#333]">
          <Header />
          <div className="mx-[15px] bg-[#f5f6fb] px-[15px] pt-[7px]">
            <div className="mb-5 h-[84px] rounded border border-[#e3e3e3] bg-[#f5f5f5] px-[19px] pt-[18px] shadow-[inset_0_1px_1px_rgba(0,0,0,0.05)]">
              <p className="text-[17px] leading-[22px] font-semibold text-[#444]">
                The Careers Service at University of Glasgow places adverts in good faith based on information provided by the employer - however, please review <a href="#" className="text-[#fd3733]">our full disclaimer</a>.
              </p>
            </div>
            <div className="grid grid-cols-[793fr_557fr] items-start gap-[30px]">
              <Vacancy />
              <Sidebar />
            </div>
          </div>
        </main>
      </div>
      <footer className="h-[82px] shrink-0 px-8 pt-8">
        <div className="flex h-[50px] justify-center rounded-t-md bg-[linear-gradient(90deg,#d4775f_0%,#d67b64_22%,#cc7862_31%,#a0685a_38%,#82594f_50%,#755049_65%,#7b554e_80%,#8e6156_100%)]">
          {dock.map((d) => <DockItem key={d.name} {...d} />)}
          <div className="flex w-[17px] shrink-0 items-center justify-center"><span className="h-9 w-px bg-[#573a35]" /></div>
          {files.map((d) => <DockItem key={d.name} {...d} />)}
        </div>
      </footer>
      <Notification />
    </div>
  );
}
